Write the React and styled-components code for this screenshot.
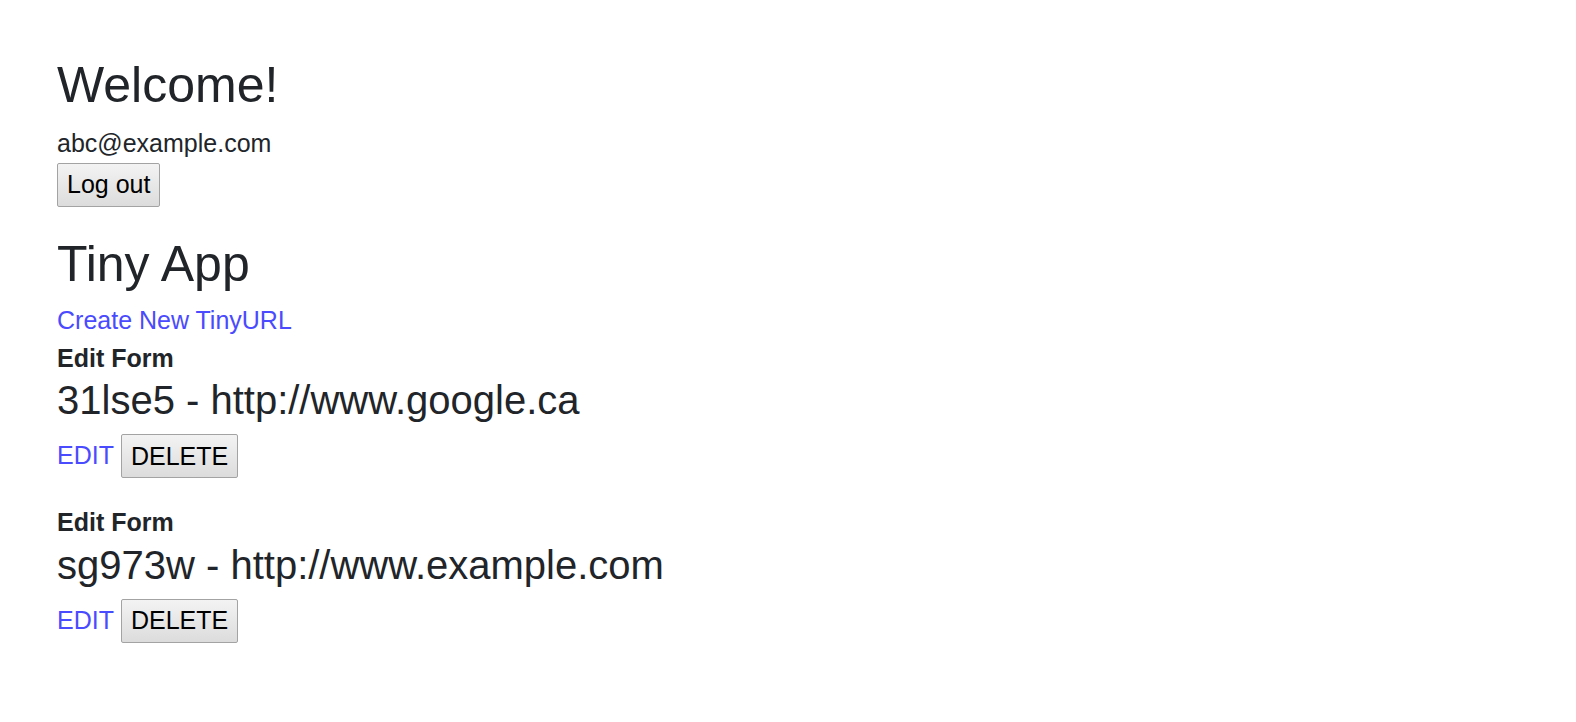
import React from 'react';
import styled, { createGlobalStyle } from 'styled-components';

const GlobalStyle = createGlobalStyle`
  html, body {
    margin: 0;
    padding: 0;
    background: #fff;
  }

  body {
    font-family: "Liberation Sans", Arial, sans-serif;
    font-size: 25px;
    line-height: 1.5;
    color: #212529;
  }
`;

const Wrapper = styled.div`
  padding: 55px 57px;
`;

const Heading = styled.h1`
  margin: ${({ $top }) => $top || '0'} 0 ${({ $bottom }) => $bottom || '10px'};
  font-size: 50px;
  font-weight: 400;
  line-height: 60px;
`;

const Email = styled.div`
  line-height: 37.5px;
`;

const Button = styled.button`
  display: inline-flex;
  align-items: center;
  height: 44px;
  padding: 0 9px;
  border: 1px solid #a3a3a3;
  border-radius: 2px;
  background: linear-gradient(to bottom, #f3f3f3, #dcdcdc);
  color: #000;
  font-family: "Liberation Sans", Arial, sans-serif;
  font-size: 25px;
  line-height: 1;
  cursor: pointer;
`;

const Link = styled.a`
  color: #4a4aff;
  text-decoration: none;
`;

const CreateLink = styled(Link)`
  display: block;
  line-height: 37.5px;
`;

const Entry = styled.div`
  margin-bottom: 26px;
`;

const Label = styled.div`
  font-weight: 700;
  line-height: 37.5px;
`;

const UrlLine = styled.h3`
  margin: 0;
  font-size: 40px;
  font-weight: 400;
  line-height: 46px;
`;

const Actions = styled.div`
  display: flex;
  align-items: center;
  gap: 7px;
  margin-top: 11px;
`;

const urls = [
  { id: '31lse5', long: 'http://www.google.ca' },
  { id: 'sg973w', long: 'http://www.example.com' },
];

export default function App() {
  return (
    <>
      <GlobalStyle />
      <Wrapper>
        <Heading>Welcome!</Heading>
        <Email>abc@example.com</Email>
        <Button type="button">Log out</Button>

        <Heading $top="27px" $bottom="8.5px">Tiny App</Heading>
        <CreateLink href="#new">Create New TinyURL</CreateLink>

        {urls.map((u) => (
          <Entry key={u.id}>
            <Label>Edit Form</Label>
            <UrlLine>{u.id} - {u.long}</UrlLine>
            <Actions>
              <Link href={`#${u.id}`}>EDIT</Link>
              <Button type="button">DELETE</Button>
            </Actions>
          </Entry>
        ))}
      </Wrapper>
    </>
  );
}
